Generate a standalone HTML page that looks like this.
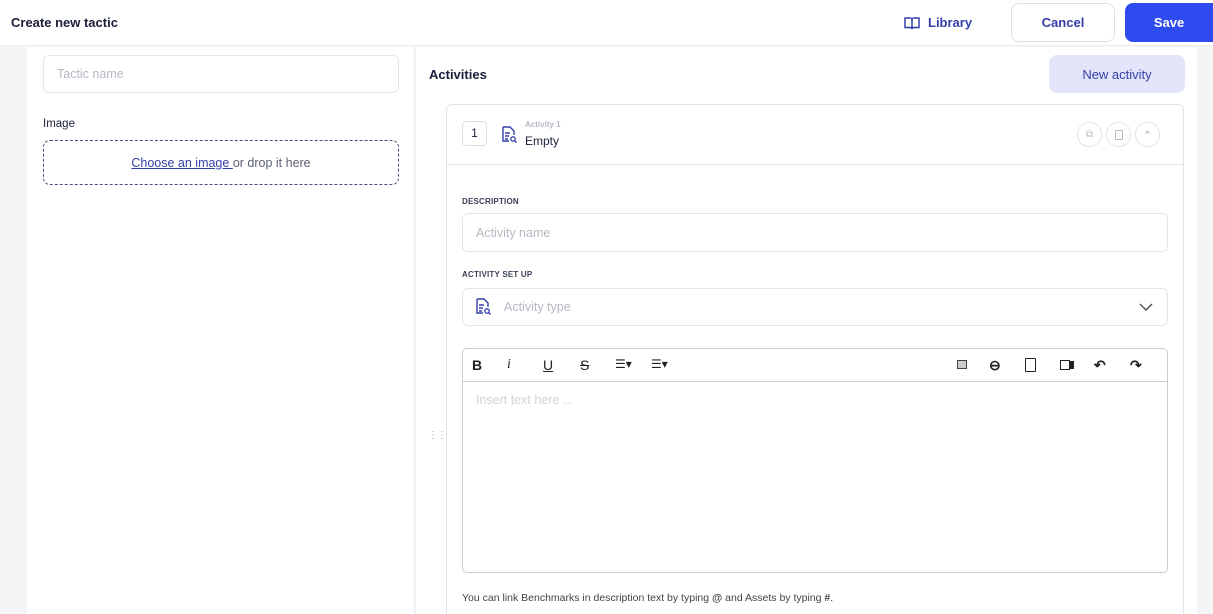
<!DOCTYPE html>
<html><head><style>
*{box-sizing:border-box;margin:0;padding:0}
html,body{width:1213px;height:614px;overflow:hidden}
body{background:#f4f5f7;font-family:"Liberation Sans",sans-serif;color:#1b1f3b;position:relative}
.abs{position:absolute}
.hdr{left:0;top:0;width:1213px;height:46px;background:#fff;border-bottom:1px solid #eceef1}
.btn{position:absolute;border-radius:8px;font-size:13px;font-weight:bold;display:flex;align-items:center;justify-content:center}
.inp{position:absolute;border:1px solid #e4e6ea;border-radius:6px;background:#fff;font-size:12.5px;color:#b4b8c2;display:flex;align-items:center;padding-left:13px}
.lbl{position:absolute;font-size:8px;font-weight:bold;color:#3b4056;letter-spacing:.2px}
.tb{position:absolute;top:357px;font-size:14px;color:#222}
</style></head><body>
<div class="abs hdr"></div>
<div class="abs" style="left:11px;top:15px;font-size:13px;font-weight:bold">Create new tactic</div>
<svg class="abs" style="left:904px;top:16px" width="16" height="14" viewBox="0 0 16 14"><path d="M1 2h5a2 2 0 0 1 2 2v9a2 2 0 0 0-2-1.5H1zM15 2h-5a2 2 0 0 0-2 2v9a2 2 0 0 1 2-1.5h5z" fill="none" stroke="#3440a8" stroke-width="1.5"/></svg>
<div class="abs" style="left:928px;top:15px;font-size:13px;font-weight:bold;color:#3440a8">Library</div>
<div class="btn" style="left:1011px;top:3px;width:104px;height:39px;border:1px solid #dcdfe5;color:#3440a8;background:#fff">Cancel</div>
<div class="btn" style="left:1125px;top:3px;width:88px;height:39px;background:#2e4bf0;color:#fff;border-radius:8px 0 0 8px">Save</div>

<div class="abs" style="left:27px;top:47px;width:388px;height:567px;background:#fff;border-right:1px solid #e6e8ec"></div>
<div class="abs" style="left:416px;top:47px;width:781px;height:567px;background:#fff"></div>
<div class="inp" style="left:43px;top:55px;width:356px;height:38px">Tactic name</div>
<div class="abs" style="left:43px;top:118px;font-size:11.5px">Image</div>
<div class="abs" style="left:43px;top:140px;width:356px;height:45px;border:1px dashed #4a4f7a;border-radius:7px;font-size:12.5px;color:#5a5f72;text-align:center;line-height:45px"><span style="color:#3440a8;text-decoration:underline">Choose an image </span>or drop it here</div>

<div class="abs" style="left:429px;top:67px;font-size:13px;font-weight:bold">Activities</div>
<div class="btn" style="left:1049px;top:55px;width:136px;height:38px;background:#e3e6fa;color:#3440a8;font-weight:normal">New activity</div>
<div class="abs" style="left:446px;top:104px;width:738px;height:520px;border:1px solid #e2e4e8;border-radius:6px"></div>
<div class="abs" style="left:446px;top:164px;width:738px;height:1px;background:#e2e4e8"></div>
<div class="abs" style="left:462px;top:121px;width:25px;height:25px;border:1px solid #dcdfe5;border-radius:4px;font-size:12px;text-align:center;line-height:23px">1</div>
<svg class="abs" style="left:501px;top:126px" width="16" height="17" viewBox="0 0 16 17"><path d="M2 1h7l4 4v4M2 1v14h6" fill="none" stroke="#3440a8" stroke-width="1.4"/><path d="M4 7h5M4 10h4M4 13h3" stroke="#3440a8" stroke-width="1.4"/><circle cx="12" cy="13" r="2.2" fill="none" stroke="#3440a8" stroke-width="1.3"/><path d="M13.5 14.5l2 2" stroke="#3440a8" stroke-width="1.3"/></svg>
<div class="abs" style="left:525px;top:120px;font-size:8px;color:#b4b8c2;font-weight:bold">Activity 1</div>
<div class="abs" style="left:525px;top:134px;font-size:12px">Empty</div>
<div class="abs" style="left:1077px;top:122px;width:25px;height:25px;border:1px solid #e2e4e8;border-radius:12px;color:#bbb;font-size:10px;text-align:center;line-height:23px">⧉</div>
<div class="abs" style="left:1106px;top:122px;width:25px;height:25px;border:1px solid #e2e4e8;border-radius:12px"><div style="margin:7px auto;width:8px;height:10px;border:1.3px solid #bbb;border-radius:1px"></div></div>
<div class="abs" style="left:1135px;top:122px;width:25px;height:25px;border:1px solid #e2e4e8;border-radius:12px;color:#999;font-size:9px;text-align:center;line-height:23px">^</div>

<div class="lbl" style="left:462px;top:197px">DESCRIPTION</div>
<div class="inp" style="left:462px;top:213px;width:706px;height:39px">Activity name</div>
<div class="lbl" style="left:462px;top:270px">ACTIVITY SET UP</div>
<div class="inp" style="left:462px;top:288px;width:706px;height:38px;padding-left:41px">Activity type</div>
<svg class="abs" style="left:475px;top:298px" width="16" height="17" viewBox="0 0 16 17"><path d="M2 1h7l4 4v4M2 1v14h6" fill="none" stroke="#3440a8" stroke-width="1.4"/><path d="M4 7h5M4 10h4M4 13h3" stroke="#3440a8" stroke-width="1.4"/><circle cx="12" cy="13" r="2.2" fill="none" stroke="#3440a8" stroke-width="1.3"/><path d="M13.5 14.5l2 2" stroke="#3440a8" stroke-width="1.3"/></svg>
<svg class="abs" style="left:1139px;top:303px" width="14" height="8"><path d="M1 1l6 6 6-6" fill="none" stroke="#555" stroke-width="1.5"/></svg>

<div class="abs" style="left:462px;top:348px;width:706px;height:225px;border:1px solid #c9ccd2;border-radius:5px"></div>
<div class="abs" style="left:462px;top:381px;width:706px;height:1px;background:#c9ccd2"></div>
<div class="tb" style="left:472px;font-weight:bold">B</div>
<div class="tb" style="left:507px;font-style:italic;font-family:'Liberation Serif',serif">i</div>
<div class="tb" style="left:543px;text-decoration:underline">U</div>
<div class="tb" style="left:580px;text-decoration:line-through">S</div>
<div class="tb" style="left:615px;font-size:12px">☰▾</div>
<div class="tb" style="left:651px;font-size:12px">☰▾</div>
<div class="abs" style="left:957px;top:360px;width:10px;height:9px;border:1px solid #444;background:#ccc"></div>
<div class="tb" style="left:989px;font-weight:bold">⊖</div>
<div class="abs" style="left:1025px;top:358px;width:11px;height:14px;border:1.6px solid #222;border-radius:1px"></div>
<div class="abs" style="left:1060px;top:360px;width:10px;height:10px;border:1.6px solid #222"></div><div class="abs" style="left:1070px;top:361px;width:4px;height:8px;background:#222"></div>
<div class="tb" style="left:1094px;font-weight:bold">↶</div>
<div class="tb" style="left:1130px;font-weight:bold">↷</div>
<div class="abs" style="left:476px;top:393px;font-size:12.5px;color:#d0d3d8">Insert text here ...</div>
<div class="abs" style="left:428px;top:430px;font-size:10px;color:#aaa;letter-spacing:-1px">⋮⋮</div>
<div class="abs" style="left:462px;top:592px;font-size:10.5px;color:#444">You can link Benchmarks in description text by typing <b>@</b> and Assets by typing <b>#</b>.</div>
</body></html>
